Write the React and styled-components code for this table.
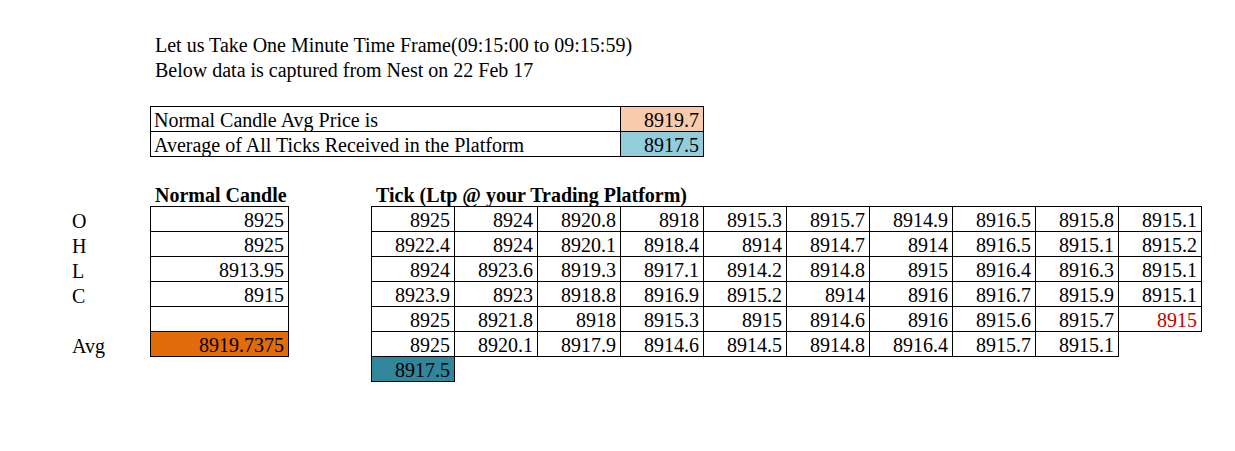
import React from 'react'
import styled, { createGlobalStyle } from 'styled-components'

const GlobalStyle = createGlobalStyle`
    html, body {
        margin: 0;
        padding: 0;
        background: #FFFFFF;
    }
    body {
        font-family: "Liberation Serif", "Times New Roman", serif;
        font-size: 20px;
        color: #000000;
    }
`

const ticks = [
    ['8925', '8924', '8920.8', '8918', '8915.3', '8915.7', '8914.9', '8916.5', '8915.8', '8915.1'],
    ['8922.4', '8924', '8920.1', '8918.4', '8914', '8914.7', '8914', '8916.5', '8915.1', '8915.2'],
    ['8924', '8923.6', '8919.3', '8917.1', '8914.2', '8914.8', '8915', '8916.4', '8916.3', '8915.1'],
    ['8923.9', '8923', '8918.8', '8916.9', '8915.2', '8914', '8916', '8916.7', '8915.9', '8915.1'],
    ['8925', '8921.8', '8918', '8915.3', '8915', '8914.6', '8916', '8915.6', '8915.7', '8915'],
    ['8925', '8920.1', '8917.9', '8914.6', '8914.5', '8914.8', '8916.4', '8915.7', '8915.1', null],
]

const candle = [
    { label: 'O', value: '8925' },
    { label: 'H', value: '8925' },
    { label: 'L', value: '8913.95' },
    { label: 'C', value: '8915' },
    { label: '', value: '' },
    { label: 'Avg', value: '8919.7375', bg: '#E26B0A' },
]

const App = () => {
    return (
        <>
            <GlobalStyle />
            <Page>
                <Heading>
                    <Line>Let us Take One Minute Time Frame(09:15:00 to 09:15:59)</Line>
                    <Line>Below data is captured from Nest on 22 Feb 17</Line>
                </Heading>

                <Summary>
                    <Cell $align="left">Normal Candle Avg Price is</Cell>
                    <Cell $bg="#F8CBAD">8919.7</Cell>
                    <Cell $align="left">Average of All Ticks Received in the Platform</Cell>
                    <Cell $bg="#92CDDC">8917.5</Cell>
                </Summary>

                <Section>
                    <Labels>
                        <Line />
                        <LabelRows>
                            {candle.map((r, i) => <Line key={i}>{r.label}</Line>)}
                        </LabelRows>
                    </Labels>

                    <div>
                        <Title>Normal Candle</Title>
                        <Candle>
                            {candle.map((r, i) => (
                                <Cell key={i} $bg={r.bg}>{r.value}</Cell>
                            ))}
                        </Candle>
                    </div>

                    <div>
                        <Title>Tick (Ltp @ your Trading Platform)</Title>
                        <TickGrid>
                            {ticks.map((row, i) => row.map((v, j) => (
                                v === null
                                    ? <Cell key={`${i}-${j}`} $bare />
                                    : <Cell key={`${i}-${j}`} $color={i === 4 && j === 9 ? '#C00000' : undefined}>{v}</Cell>
                            )))}
                            <Cell $bg="#31869B">8917.5</Cell>
                        </TickGrid>
                    </div>
                </Section>
            </Page>
        </>
    )
}

const Page = styled.div`
    width: 1235px;
    height: 451px;
    box-sizing: border-box;
    padding: 31px 0 0 67px;
`

const Heading = styled.div`
    margin-left: 83px;
    margin-bottom: 25px;
`

const Line = styled.div`
    height: 25px;
    display: flex;
    align-items: flex-end;
    padding: 0 0 1px 5px;
    box-sizing: border-box;
    line-height: 20px;
    white-space: nowrap;
`

const Title = styled(Line)`
    font-weight: bold;
`

const Summary = styled.div`
    margin-left: 83px;
    margin-bottom: 24px;
    display: grid;
    grid-template-columns: 470px 83px;
    grid-auto-rows: 25px;
    width: max-content;
    border-left: 1px solid #000;
    border-top: 1px solid #000;
`

const Cell = styled.div`
    box-sizing: border-box;
    display: flex;
    align-items: flex-end;
    justify-content: ${p => p.$align === 'left' ? 'flex-start' : 'flex-end'};
    padding: ${p => p.$align === 'left' ? '0 0 1px 3px' : '0 4px 1px 0'};
    line-height: 20px;
    white-space: nowrap;
    background: ${p => p.$bg || 'transparent'};
    color: ${p => p.$color || '#000'};
    border-right: ${p => p.$bare ? 'none' : '1px solid #000'};
    border-bottom: ${p => p.$bare ? 'none' : '1px solid #000'};
`

const Section = styled.div`
    display: flex;
    gap: 82px;
`

const Labels = styled.div`
    width: 83px;
    margin-right: -82px;
`

const LabelRows = styled.div`
    padding-top: 1px;
`

const Candle = styled.div`
    display: grid;
    grid-template-columns: 138px;
    grid-auto-rows: 25px;
    border-left: 1px solid #000;
    border-top: 1px solid #000;
`

const TickGrid = styled.div`
    display: grid;
    grid-template-columns: repeat(10, 83px);
    grid-auto-rows: 25px;
    width: max-content;
    border-left: 1px solid #000;
    border-top: 1px solid #000;
`

export default App
